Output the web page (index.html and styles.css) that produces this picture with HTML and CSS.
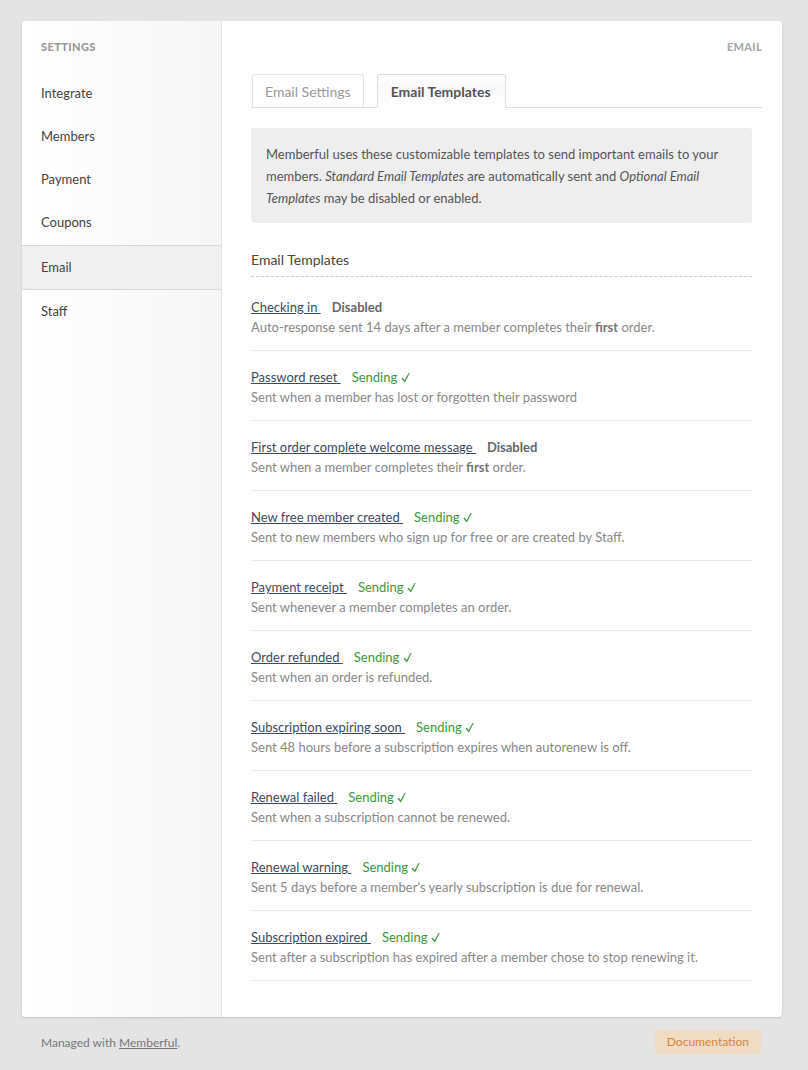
FILE: index.html
```html
<!DOCTYPE html>
<html lang="en">
  <head>
    <meta charset="UTF-8" />
    <title>Email Templates</title>
    <link rel="stylesheet" href="styles.css">
  </head>
  <body>
    <div class="card">
      <div class="sidebar">
        <h4 class="side-title">SETTINGS</h4>
        <ul class="nav">
          <li><a href="#">Integrate</a></li>
          <li><a href="#">Members</a></li>
          <li><a href="#">Payment</a></li>
          <li><a href="#">Coupons</a></li>
          <li class="active"><a href="#">Email</a></li>
          <li><a href="#">Staff</a></li>
        </ul>
      </div>
      <div class="main">
        <div class="crumb">EMAIL</div>
        <div class="tabs">
          <a class="tab" href="#">Email Settings</a>
          <a class="tab on" href="#">Email Templates</a>
        </div>
        <div class="note">
          Memberful uses these customizable templates to send important emails to your members. <em>Standard Email Templates</em> are automatically sent and <em>Optional Email Templates</em> may be disabled or enabled.
        </div>
        <h3 class="list-title">Email Templates</h3>
        <ul class="tpl">
          <li>
            <div><a href="#">Checking in </a><span class="off">Disabled</span></div>
            <p>Auto-response sent 14 days after a member completes their <b>first</b> order.</p>
          </li>
          <li>
            <div><a href="#">Password reset </a><span class="ok">Sending <svg class="tick" viewBox="0 0 10 12"><polygon points="0.5,7.2 1.9,6.2 4,9 8.6,0.6 9.6,1.2 4.3,11.6"/></svg></span></div>
            <p>Sent when a member has lost or forgotten their password</p>
          </li>
          <li>
            <div><a href="#">First order complete welcome message </a><span class="off">Disabled</span></div>
            <p>Sent when a member completes their <b>first</b> order.</p>
          </li>
          <li>
            <div><a href="#">New free member created </a><span class="ok">Sending <svg class="tick" viewBox="0 0 10 12"><polygon points="0.5,7.2 1.9,6.2 4,9 8.6,0.6 9.6,1.2 4.3,11.6"/></svg></span></div>
            <p>Sent to new members who sign up for free or are created by Staff.</p>
          </li>
          <li>
            <div><a href="#">Payment receipt </a><span class="ok">Sending <svg class="tick" viewBox="0 0 10 12"><polygon points="0.5,7.2 1.9,6.2 4,9 8.6,0.6 9.6,1.2 4.3,11.6"/></svg></span></div>
            <p>Sent whenever a member completes an order.</p>
          </li>
          <li>
            <div><a href="#">Order refunded </a><span class="ok">Sending <svg class="tick" viewBox="0 0 10 12"><polygon points="0.5,7.2 1.9,6.2 4,9 8.6,0.6 9.6,1.2 4.3,11.6"/></svg></span></div>
            <p>Sent when an order is refunded.</p>
          </li>
          <li>
            <div><a href="#">Subscription expiring soon </a><span class="ok">Sending <svg class="tick" viewBox="0 0 10 12"><polygon points="0.5,7.2 1.9,6.2 4,9 8.6,0.6 9.6,1.2 4.3,11.6"/></svg></span></div>
            <p>Sent 48 hours before a subscription expires when autorenew is off.</p>
          </li>
          <li>
            <div><a href="#">Renewal failed </a><span class="ok">Sending <svg class="tick" viewBox="0 0 10 12"><polygon points="0.5,7.2 1.9,6.2 4,9 8.6,0.6 9.6,1.2 4.3,11.6"/></svg></span></div>
            <p>Sent when a subscription cannot be renewed.</p>
          </li>
          <li>
            <div><a href="#">Renewal warning </a><span class="ok">Sending <svg class="tick" viewBox="0 0 10 12"><polygon points="0.5,7.2 1.9,6.2 4,9 8.6,0.6 9.6,1.2 4.3,11.6"/></svg></span></div>
            <p>Sent 5 days before a member's yearly subscription is due for renewal.</p>
          </li>
          <li>
            <div><a href="#">Subscription expired </a><span class="ok">Sending <svg class="tick" viewBox="0 0 10 12"><polygon points="0.5,7.2 1.9,6.2 4,9 8.6,0.6 9.6,1.2 4.3,11.6"/></svg></span></div>
            <p>Sent after a subscription has expired after a member chose to stop renewing it.</p>
          </li>
        </ul>
      </div>
    </div>
    <div class="footer">
      <span>Managed with <a href="#">Memberful</a>.</span>
      <a class="doc" href="#">Documentation</a>
    </div>
  </body>
</html>
```

FILE: styles.css
```css
* {
  margin: 0;
  padding: 0;
  box-sizing: border-box;
}
body {
  background: #e4e4e4;
  font-family: Lato, "Open Sans", sans-serif;
  font-size: 13px;
  color: #555;
  padding: 21px 26px 0 22px;
}
a {
  color: inherit;
}
.card {
  display: flex;
  background: #fff;
  border-radius: 4px;
  box-shadow: 0 1px 2px rgba(0,0,0,0.15);
  min-height: 996px;
}
/* sidebar */
.sidebar {
  width: 200px;
  flex-shrink: 0;
  border-right: 1px solid #e2e2e2;
  background: linear-gradient(to right, #fff, #f6f6f6);
  border-radius: 4px 0 0 4px;
  padding-top: 19px;
}
.side-title {
  font-size: 11px;
  font-weight: 900;
  color: #999;
  padding-left: 19px;
  letter-spacing: 0.4px;
  line-height: 14px;
  margin-bottom: 28px;
}
.nav {
  list-style: none;
}
.nav li {
  height: 43px;
  line-height: 20px;
  padding: 1px 0 0 19px;
}
.nav li a {
  text-decoration: none;
  color: #444;
}
.nav li.active {
  background: #f0f0f0;
  border-top: 1px solid #d8d8d8;
  border-bottom: 1px solid #d8d8d8;
  height: 45px;
  padding-top: 11px;
  margin-bottom: 10px;
}
.nav li:nth-child(4) {
  height: 34px;
}
/* main */
.main {
  flex: 1;
  padding: 19px 20px 36px 29px;
}
.crumb {
  text-align: right;
  font-size: 11px;
  font-weight: 900;
  color: #aaa;
  letter-spacing: 0.3px;
  line-height: 14px;
}
.tabs {
  display: flex;
  gap: 13px;
  margin-top: 20px;
  border-bottom: 1px solid #ddd;
  padding-left: 1px;
}
.tab {
  display: block;
  height: 34px;
  line-height: 33px;
  padding: 0 12px;
  margin-bottom: -1px;
  border: 1px solid #e2e2e2;
  border-bottom-color: #ddd;
  border-radius: 3px 3px 0 0;
  text-decoration: none;
  color: #999;
  font-size: 14px;
}
.tab.on {
  font-weight: bold;
  color: #555;
  padding: 0 14px 0 13px;
  border-color: #ddd;
  border-bottom-color: #fff;
  background: linear-gradient(#fff, #f9f9f9 40%, #fff);
}
.note {
  margin: 20px 10px 0 0;
  background: #eee;
  border-radius: 3px;
  padding: 15px 14px 14px 15px;
  line-height: 22px;
  color: #555;
}
.list-title {
  font-weight: normal;
  font-size: 14px;
  color: #444;
  margin: 27px 10px 0 0;
  padding-bottom: 6px;
  border-bottom: 1px dashed #ccc;
  line-height: 20px;
}
.tpl {
  list-style: none;
  margin: 4px 10px 0 0;
}
.tpl li {
  height: 70px;
  border-bottom: 1px solid #e8e8e8;
  padding-top: 17px;
}
.tpl li div {
  line-height: 18px;
  height: 18px;
}
.tpl li div a {
  color: #3c4a5e;
  margin-right: 11px;
}
.tpl p {
  color: #888;
  line-height: 22px;
}
.tpl b {
  color: #777;
}
.off {
  font-weight: bold;
  color: #666;
}
.ok {
  color: #3b973b;
}
.tick {
  width: 9px;
  height: 11px;
  fill: #3b973b;
  vertical-align: -1px;
}
/* footer */
.footer {
  display: flex;
  justify-content: space-between;
  align-items: center;
  padding: 13px 21px 0 19px;
  font-size: 12px;
  color: #777;
}
.doc {
  background: #efdcc3;
  color: #d6853a;
  text-decoration: none;
  padding: 0 12px;
  height: 24px;
  line-height: 24px;
  border-radius: 2px;
  font-size: 12px;
}
```
